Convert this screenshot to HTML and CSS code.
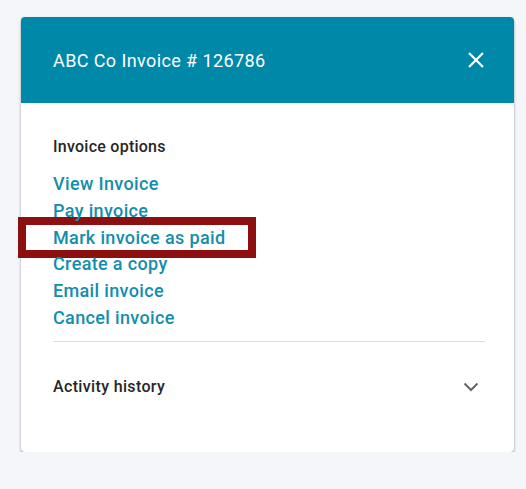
FILE: index.html
```html
<!DOCTYPE html>
<html>
<head>
<meta charset="utf-8">
<link rel="stylesheet" href="styles.css">
</head>
<body>
<div class="card">
  <div class="card-header">
    <span class="title">ABC Co Invoice # 126786</span>
    <svg class="close" width="16" height="16" viewBox="0 0 16 16"><path d="M1 1L15 15M15 1L1 15" stroke="#fff" stroke-width="2.2" fill="none"/></svg>
  </div>
  <div class="card-body">
    <div class="section-title">Invoice options</div>
    <ul class="links">
      <li><a>View Invoice</a></li>
      <li><a>Pay invoice</a></li>
      <li class="marked"><a>Mark invoice as paid</a><span class="highlight"></span></li>
      <li><a>Create a copy</a></li>
      <li><a>Email invoice</a></li>
      <li><a>Cancel invoice</a></li>
    </ul>
    <div class="divider"></div>
    <div class="activity">
      <span>Activity history</span>
      <svg class="chevron" width="16" height="10" viewBox="0 0 16 10"><path d="M1.5 1.5L8 8L14.5 1.5" stroke="#666" stroke-width="2" fill="none"/></svg>
    </div>
  </div>
</div>
</body>
</html>
```
FILE: styles.css
```css
html, body {
  margin: 0;
  padding: 0;
  background: #f5f6fa;
  font-family: Roboto, "Liberation Sans", sans-serif;
}
body {
  padding: 17px 0 0 21px;
}
.card {
  width: 493px;
  height: 435px;
  background: #fff;
  border-radius: 4px;
  box-shadow: 0 2px 3px rgba(0,0,0,0.35), 0 0 1px rgba(0,0,0,0.15);
}
.card-header {
  height: 86px;
  background: #0088a9;
  border-radius: 4px 4px 0 0;
  display: flex;
  align-items: center;
  justify-content: space-between;
  padding: 0 30px 0 32px;
  box-sizing: border-box;
}
.title {
  color: #fff;
  font-size: 18px;
  font-weight: 400;
  letter-spacing: 0.4px;
}
.close {
  display: block;
}
.card-body {
  padding: 34px 29px 0 32px;
}
.section-title {
  font-size: 16px;
  font-weight: 500;
  color: #262626;
  line-height: 20px;
  letter-spacing: 0.25px;
}
.links {
  list-style: none;
  margin: 14px 0 0 0;
  padding: 0;
}
.links li {
  position: relative;
  line-height: 26.8px;
  font-size: 18px;
  font-weight: 500;
  letter-spacing: 0.35px;
  color: #138eab;
}
.links a {
  position: relative;
  z-index: 1;
}
.highlight {
  position: absolute;
  left: -35px;
  top: -8px;
  width: 222px;
  height: 25px;
  border: 8px solid #8c1010;
  background: #fff;
  z-index: 0;
}
.divider {
  height: 1px;
  background: #dddddd;
  margin-top: 9px;
}
.activity {
  display: flex;
  align-items: center;
  justify-content: space-between;
  height: 90px;
  font-size: 16px;
  font-weight: 500;
  color: #262626;
  letter-spacing: 0.35px;
  padding-right: 6px;
}
.chevron {
  display: block;
}
```
